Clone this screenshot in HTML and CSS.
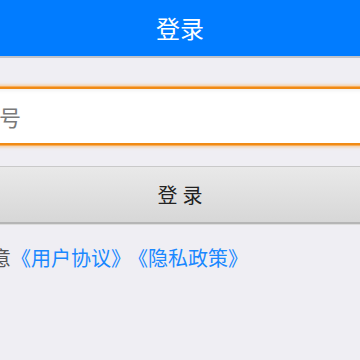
FILE: index.html
```html
<!DOCTYPE html>
<html lang="zh-CN">
<head>
<meta charset="utf-8">
<title>登录</title>
<link rel="stylesheet" href="styles.css">
</head>
<body>
<header class="topbar"><h1 class="title">登录</h1></header>
<main class="main">
  <div class="field"><input class="input" type="text" placeholder="请输入手机号"></div>
  <button class="btn" type="button">登录</button>
  <p class="agree">我已阅读并同意<a class="link" href="#">《用户协议》</a><a class="link link-gap" href="#">《隐私政策》</a></p>
</main>
</body>
</html>
```

FILE: styles.css
```css
html, body {
  margin: 0;
  padding: 0;
  background: #efeef3;
  overflow: hidden;
  font-family: "Noto Sans CJK SC", "Noto Sans", sans-serif;
}
.topbar {
  height: 56px;
  background: #017cff;
  border-bottom: 2px solid #bfc3cb;
  display: flex;
  align-items: center;
  justify-content: center;
}
.title {
  margin: 0;
  color: #fff;
  font-size: 24px;
  font-weight: 400;
  line-height: 1;
}
.main {
  margin: 0 -130px;
  padding-top: 29px;
}
.field {
  display: flex;
}
.input {
  flex: 1;
  height: 58px;
  box-sizing: border-box;
  border: 2px solid #f08a14;
  box-shadow: 0 0 0 1px #f7ad5a, 0 0 3px 2px rgba(248, 185, 110, 0.7), inset 0 3px 4px -2px rgba(0, 0, 0, 0.08);
  background: #fff;
  padding: 0 0 0 17px;
  font-family: inherit;
  font-size: 22px;
  color: #333;
  outline: none;
}
.input::placeholder {
  color: #7a7a7a;
}
.btn {
  display: block;
  width: 100%;
  margin-top: 21px;
  height: 58px;
  border: 1px solid #c9c9c9;
  border-bottom: 2px solid #b5b5b5;
  box-shadow: 0 1px 0 #dcdcdc;
  background: linear-gradient(#e9e9e9, #d7d7d7);
  font-family: inherit;
  font-size: 20px;
  letter-spacing: 5px;
  text-indent: 5px;
  color: #222;
}
.agree {
  margin: 22px 0 0;
  padding-left: 1px;
  font-size: 20px;
  line-height: 24px;
  color: #555;
}
.link {
  color: #1a88ff;
  text-decoration: none;
}
.link-gap {
  margin-left: 7px;
}
```
